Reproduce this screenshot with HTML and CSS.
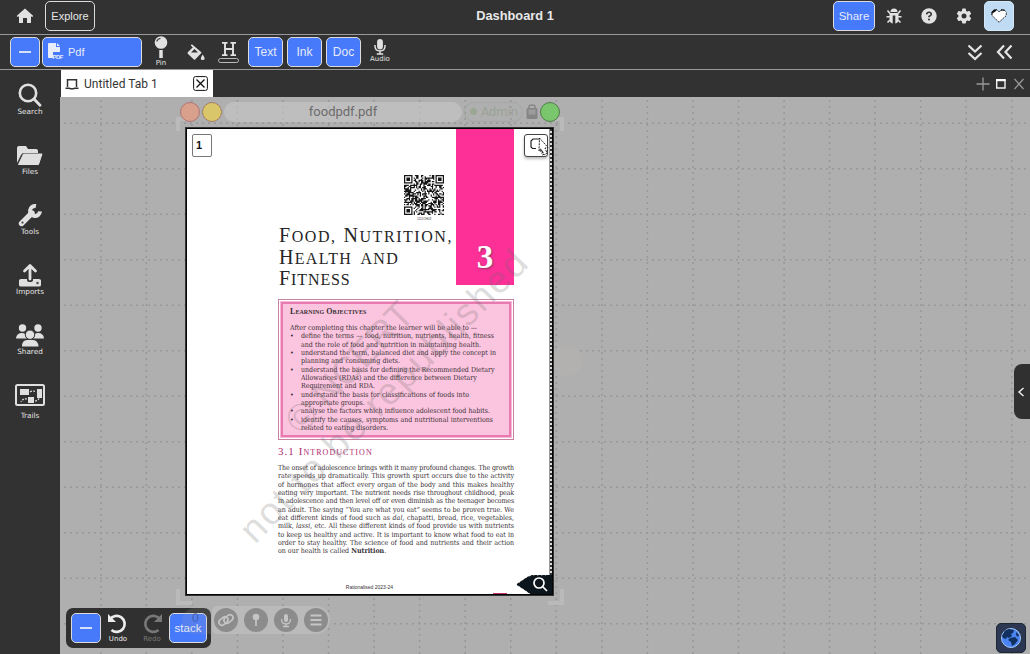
FILE: index.html
```html
<!DOCTYPE html>
<html lang="en">
<head>
<meta charset="utf-8">
<title>Dashboard 1</title>
<link rel="stylesheet" href="styles.css">
</head>
<body>
<div class="app">
  <header class="topbar">
    <div class="top-left">
      <svg class="home" width="18" height="16" viewBox="0 0 18 16"><path d="M9 0.500 17.300 8 16.200 9 15 8.200V15H11V10H7V15H3V8.200L1.800 9 .7 8 5 4z" fill="#e2e2e2"/></svg>
      <button class="btn outline">Explore</button>
    </div>
    <div class="title">Dashboard 1</div>
    <div class="top-right">
      <button class="btn blue share">Share</button>
      <svg class="ticon" viewBox="0 0 16 16"><g fill="none" stroke="#e2e2e2" stroke-width="1.600"><path d="M1.500 2.500 4 5.500M14.500 2.500 12 5.500M.5 8.700H4M15.500 8.700H12M1.500 14.500 4 12M14.500 14.500 12 12"/></g><path d="M4.500 4a3.500 3.500 0 0 1 7 0zM3.500 5h9v6q0 4-3.200 4.500V7.500H6.700V15.500Q3.500 15 3.500 11z" fill="#e2e2e2"/></svg>
      <svg class="ticon" viewBox="0 0 16 16"><circle cx="8" cy="8" r="7.700" fill="#e2e2e2"/><path d="M5.700 6.300Q5.900 4.300 8 4.300T10.300 6.200Q10.300 7.300 8 8.500V9.300" fill="none" stroke="#323232" stroke-width="1.600"/><circle cx="8" cy="11.500" r="1" fill="#323232"/></svg>
      <svg class="ticon" viewBox="0 0 16 16"><g fill="#e2e2e2"><circle cx="8" cy="8" r="5.600"/><rect x="6" y=".6" width="4" height="14.800" rx="1"/><rect x="6" y=".6" width="4" height="14.800" rx="1" transform="rotate(60 8 8)"/><rect x="6" y=".6" width="4" height="14.800" rx="1" transform="rotate(120 8 8)"/></g><circle cx="8" cy="8" r="2.500" fill="#323232"/></svg>
      <button class="btn avatar"><svg width="16" height="14" viewBox="0 0 16 14"><path d="M8 13.300 1 6.500V3L3.500.8H6L8 3 10 .8h3L15.300 3v3.500z" fill="#fff" stroke="#111" stroke-dasharray="1.500 1"/><path d="M.5 6V3L3 .5H6L4.500 2.500 2 4zM9 2.500 10.500.5H13L14 2 11 1.500z" fill="#111"/></svg></button>
    </div>
  </header>

  <div class="toolbar">
    <button class="btn blue minus"><i></i></button>
    <button class="btn blue pdf"><svg width="16" height="17" viewBox="0 0 16 17"><path d="M1 0H8V4H12V9H5V15H1Q0 15 0 14V1Q0 0 1 0ZM9 0 12 3H9Z" fill="#e8ecf8"/><text x="4.500" y="15.800" class="pdf-mark" textLength="11">PDF</text></svg><span>Pdf</span></button>
    <div class="tool pin"><svg width="14" height="23" viewBox="0 0 14 23"><circle cx="7" cy="6.500" r="6.300" fill="#e2e2e2"/><path d="M2.700 5.500Q3.500 2.700 6.500 2.300" stroke="#444" fill="none" stroke-width="1.200"/><path d="M7 14v8" stroke="#e2e2e2" stroke-width="3.500"/></svg><span>Pin</span></div>
    <svg class="bucket" width="18" height="17" viewBox="0 0 18 17"><path d="M4.300.9 13.500 8.700 7.500 14.800 1.400 9 6.500 4" fill="#e2e2e2" stroke="#e2e2e2" stroke-width="1.800" stroke-linejoin="round"/><path d="M4 8.500 7.500 5 11 8.500z" fill="#323232"/><path d="M15.700 10.500Q19.500 16 15.700 16T15.700 10.500" fill="#e2e2e2"/></svg>
    <div class="highlight"><svg width="16" height="14" viewBox="0 0 16 14"><path d="M1 .9H6.500M9.500 .9h5.500M1 13.100H6.500M9.500 13.100h5.500M4 1V13M12 1V13M4 7h8" stroke="#e2e2e2" stroke-width="1.900"/></svg><i></i></div>
    <button class="btn blue small">Text</button>
    <button class="btn blue small">Ink</button>
    <button class="btn blue small">Doc</button>
    <div class="tool audio"><svg width="12" height="16" viewBox="0 0 12 16"><rect x="3.100" width="5.800" height="10.500" rx="2.900" fill="#e2e2e2"/><path d="M1 6v1.500Q1.500 12 6 12T11 7.500V6M6 12v3M2.800 15h6.400" fill="none" stroke="#e2e2e2" stroke-width="1.500"/></svg><span>Audio</span></div>
    <div class="chevrons">
      <svg width="16" height="17" viewBox="0 0 16 17"><path d="M1.500 1.500 8 7.500 14.500 1.500M1.500 9 8 15 14.500 9"/></svg>
      <svg width="17" height="16" viewBox="0 0 17 16"><path d="M8 1.500 2 8 8 14.500M15.500 1.500 9.500 8 15.500 14.500"/></svg>
    </div>
  </div>

  <div class="body">
    <nav class="sidebar">
      <div class="side"><svg viewBox="0 0 30 24"><circle cx="13" cy="10" r="8.200" fill="none" stroke="#e0e0e0" stroke-width="2.600"/><path d="m19 16 6 6.300" stroke="#e0e0e0" stroke-width="2.800" stroke-linecap="round"/></svg><span>Search</span></div>
      <div class="side"><svg viewBox="0 0 30 24"><path d="M2 20V5Q2 3 4 3h7l2 3h8q2 0 2 2v2H9q-2 0-3 2z" fill="#e0e0e0"/><path d="M8.500 11H27L23.500 21.500H3.500z" fill="#e0e0e0" stroke="#e0e0e0" stroke-linejoin="round"/></svg><span>Files</span></div>
      <div class="side"><svg viewBox="0 0 30 24"><path d="M6.500 20.500 17 10" stroke="#e0e0e0" stroke-width="5.400" stroke-linecap="round"/><path d="M20.500 3A5 5 0 1 0 25 8" transform="rotate(5 20 8)" fill="none" stroke="#e0e0e0" stroke-width="4"/><circle cx="7.500" cy="19.500" r="1.500" fill="#555" stroke="#fff" stroke-width=".6"/></svg><span>Tools</span></div>
      <div class="side"><svg viewBox="0 0 30 24"><path d="M4 17.500q0-1.500 2-1.500h6v1q0 2 3 2t3-2v-1h6q2 0 2 1.500V22q0 1.500-2 1.500H6Q4 23.500 4 22z" fill="#e0e0e0"/><path d="M15 16V3M9.500 8 15 2.500 20.500 8" fill="none" stroke="#e0e0e0" stroke-width="2.800" stroke-linecap="round" stroke-linejoin="round"/><circle cx="22.500" cy="20" r="1.300" fill="#555"/></svg><span>Imports</span></div>
      <div class="side"><svg viewBox="0 0 30 24"><g fill="#e0e0e0"><circle cx="7.500" cy="5" r="3.700"/><circle cx="23" cy="5" r="3.700"/><path d="M1 15.500Q1.500 10 7 10q2 0 3 1 0 3 2 4.500zM29 15.500Q28.500 10 23 10q-2 0-3 1 0 3-2 4.500zM7 23.500Q7 17 12 17h6q5 0 5.500 6.500z"/></g><circle cx="15" cy="11.700" r="4.700" fill="#e0e0e0" stroke="#323232" stroke-width="1"/></svg><span>Shared</span></div>
      <div class="side trails"><svg viewBox="0 0 30 24"><rect x="1" y="2" width="28" height="20" rx="1.500" fill="none" stroke="#e0e0e0" stroke-width="2"/><path d="M5 6h9v6H5zM22 6h5v9h-5zM13 14h6v6h-6z" fill="#e0e0e0"/><path d="M15 9q3-2 6 0M12 16q-4-1-6 3M20 18q3 0 5-4" fill="none" stroke="#e0e0e0" stroke-dasharray="2 1.200" stroke-width="1.200"/></svg><span>Trails</span></div>
    </nav>

    <main class="main">
      <div class="tabs">
        <div class="tab"><svg width="14" height="12" viewBox="0 0 14 12"><path d="M2.500 9V1.800h9V9M.5 10.300h4l1 .4h3l1-.4h4" fill="none" stroke="#333" stroke-width="1.500"/></svg><span>Untitled Tab 1</span>
          <svg class="close" width="15" height="15" viewBox="0 0 15 15"><rect x=".6" y=".6" width="13.800" height="13.800" rx="2" fill="#fff" stroke="#111"/><path d="m3.500 3.500 8 8M11.500 3.500l-8 8" stroke="#111" stroke-width="1.300"/></svg></div>
        <svg class="winctl" width="48" height="14" viewBox="0 0 48 14"><g fill="none" stroke="#999"><path d="M7 .5v13M.5 7h13M38.500 2l9 10M47.500 2l-9 10" stroke-width="1.300"/><path d="M20.700 3.500h8.300v7.500h-8.300z" stroke="#f2f2f2" stroke-width="1.400"/><path d="M20 3h9.700" stroke="#fff" stroke-width="2"/></g></svg>
      </div>

      <div class="canvas">
        <svg class="grid" width="970" height="557"><g id="grid-lines" stroke="#989898" stroke-width="1.500" stroke-dasharray="2 4"></g></svg>
        <div class="faint-dot"></div>
        <svg class="corners" width="388" height="488" viewBox="0 0 388 488" fill="none" stroke="#bababa" stroke-width="4"><path d="M2 14V2H14M374 2h12v12M2 472v14h14M372 486h14V472"/></svg>
        <div class="docbar">
          <i class="dot red"></i><i class="dot yellow"></i><div class="doc-title">foodpdf.pdf</div>
          <div class="admin"><i></i>Admin</div>
          <svg width="12" height="16" viewBox="0 0 12 16"><path d="M3 5V2.500Q3 1 6 1t3 1.500V5" fill="none" stroke="#858585" stroke-width="1.400"/><rect x=".5" y="4" width="11" height="11" rx="1.500" fill="#858585"/><path d="M2.500 5.500h7v5h-7z" fill="#9c9c9c"/></svg><i class="dot green"></i>
        </div>

        <section class="doc">
          <div class="chapter">
            <div class="chapter-left">
              <svg class="qr" id="qr" width="40" height="40" viewBox="0 0 33 33"></svg>
              <div class="qr-label">1151CH03</div>
              <h1><span class="l1"><b>F</b>ood, <b>N</b>utrition,</span><span class="l2"><b>H</b>ealth and</span><span class="l3"><b>F</b>itness</span></h1>
            </div>
            <div class="chapter-no">3</div>
          </div>
          <div class="objectives"><div class="obj-inner">
            <h2>Learning Objectives</h2>
            <p style="width:185px">After completing this chapter the learner will be able to —</p>
            <ul>
              <li><p style="width:193px">define the terms — food, nutrition, nutrients, health, fitness</p><p style="width:180px">and the role of food and nutrition in maintaining health.</p></li>
              <li><p style="width:195px">understand the term, balanced diet and apply the concept in</p><p style="width:99px">planning and consuming diets.</p></li>
              <li><p style="width:193px">understand the basis for defining the Recommended Dietary</p><p style="width:173px">Allowances (RDAs) and the difference between Dietary</p><p style="width:74px">Requirement and RDA.</p></li>
              <li><p style="width:168px">understand the basis for classifications of foods into</p><p style="width:63px">appropriate groups.</p></li>
              <li><p style="width:189px">analyse the factors which influence adolescent food habits.</p></li>
              <li><p style="width:192px">identify the causes, symptoms and nutritional interventions</p><p style="width:86px">related to eating disorders.</p></li>
            </ul>
          </div></div>
          <h3>3.1 Introduction</h3>
          <div class="prose">
            <p class="tight">The onset of adolescence brings with it many profound changes. The growth</p>
            <p>rate speeds up dramatically. This growth spurt occurs due to the activity</p>
            <p>of hormones that affect every organ of the body and this makes healthy</p>
            <p class="tight">eating very important. The nutrient needs rise throughout childhood, peak</p>
            <p class="tight">in adolescence and then level off or even diminish as the teenager becomes</p>
            <p>an adult. The saying “You are what you eat” seems to be proven true. We</p>
            <p>eat different kinds of food such as <em>dal</em>, chapatti, bread, rice, vegetables,</p>
            <p>milk, <em>lassi</em>, etc. All these different kinds of food provide us with nutrients</p>
            <p>to keep us healthy and active. It is important to know what food to eat in</p>
            <p>order to stay healthy. The science of food and nutrients and their action</p>
            <p style="width:107px">on our health is called <b>Nutrition</b>.</p>
          </div>
          <div class="foot">Rationalised 2023-24</div>
          <svg class="watermark" width="365" height="465" viewBox="187 129 365 465"><text transform="translate(255 545) rotate(-45.500)" textLength="392">not to be republished</text><text transform="translate(301 436) rotate(-46)" textLength="166">© NCERT</text></svg>
          <div class="page-no">1</div>
          <div class="annot"></div>
          <svg class="cursor" width="22" height="22" viewBox="0 0 22 22"><path d="M8 11.500H4.500L3 10V4l2-2h7" fill="none" stroke="#222" stroke-width="1.200"/><path d="M11.500 1 20 10.500l-3 .5 2 5-3 2-2-5-3 1z" fill="#fff" stroke="#222" stroke-dasharray="2 1"/><path d="m12 12 4 7" stroke="#222" stroke-width="2" stroke-dasharray="1 1"/></svg>
          <div class="scroll"></div>
          <i class="pink-mark"></i>
          <svg class="find" width="37" height="19" viewBox="0 0 37 19"><path d="M0 9.500 11 2 16 0H37V19H14L10 16z" fill="#0c151b"/><path d="M0 9.500 11 2 16 0H30M0 9.500 10 16l4 3" fill="none" stroke="#fff" stroke-dasharray="1 3"/><circle cx="23" cy="8" r="5" fill="none" stroke="#fff" stroke-width="1.700"/><path d="m26.500 11.500 4.500 4.500" stroke="#fff" stroke-width="1.700"/></svg>
        </section>

        <div class="linkbar">
          <i><svg viewBox="0 0 24 24"><g fill="none" stroke="#c5c5c5" stroke-width="1.600"><rect x="4.500" y="10" width="10" height="6" rx="3" transform="rotate(-40 9.500 13)"/><rect x="9.500" y="8" width="10" height="6" rx="3" transform="rotate(-40 14.500 11)"/></g></svg></i>
          <i><svg viewBox="0 0 24 24"><circle cx="12" cy="9" r="3.300" fill="#c5c5c5"/><path d="M12 10v8" stroke="#c5c5c5" stroke-width="1.700"/></svg></i>
          <i><svg viewBox="0 0 24 24"><rect x="10" y="6" width="4" height="8" rx="2" fill="#c5c5c5"/><path d="M7.500 11q0 5 4.500 5t4.500-5M12 16v2M9 18.500h6" fill="none" stroke="#c5c5c5" stroke-width="1.300"/></svg></i>
          <i><svg viewBox="0 0 24 24"><path d="M6.500 7.500h11M6.500 12h11M6.500 16.500h11" stroke="#c5c5c5" stroke-width="1.800"/></svg></i>
        </div>
        <div class="undobar">
          <button class="btn blue minus"><i></i></button>
          <div class="undo"><svg width="22" height="21" viewBox="0 0 22 21"><path d="M3 6.500A8 8 0 1 1 4.500 17" fill="none" stroke="currentColor" stroke-width="2.700"/><path d="M1 1v8h8z" fill="currentColor"/></svg><span>Undo</span></div>
          <div class="undo dim"><svg width="22" height="21" viewBox="0 0 22 21"><path d="M19 6.500A8 8 0 1 0 17.500 17" fill="none" stroke="currentColor" stroke-width="2.700"/><path d="M21 1v8h-8z" fill="currentColor"/></svg><span>Redo</span></div>
          <button class="btn blue stack">stack</button>
          <div class="ghost">0</div>
        </div>
        <div class="drawer"><svg width="8" height="10" viewBox="0 0 8 10"><path d="M6.500 1 2 5l4.500 4" fill="none" stroke="#f2f2f2" stroke-width="1.400"/></svg></div>
        <div class="globe"><svg width="22" height="22" viewBox="0 0 22 22"><circle cx="11" cy="11" r="9.500" fill="#4a84f2" stroke="#a8c8f5"/><path d="M5 3.500 9 2l5 1-1 3-2 1 1 2-3 2-2-1-1 2-3-1-1-2zM10 11l5-1 3 3-3 4-3 2-1-4-3-2zM16 5l3 3-1 2-2-2z" fill="#11305f"/></svg></div>
      </div>
    </main>
  </div>
</div>
<script src="draw.js"></script>
</body>
</html>
```
FILE: styles.css
```css
* { box-sizing: border-box; }
body { margin: 0; font-family: "Liberation Sans", Arial, sans-serif; overflow: hidden; background: #323232; }
p, h1, h2, h3, ul { margin: 0; padding: 0; font-weight: normal; }
svg { display: block; flex: none; }
.app { width: 1030px; height: 654px; display: flex; flex-direction: column; }
.topbar { height: 35px; flex: none; border-bottom: 1px solid #999; display: grid; grid-template-columns: 1fr auto 1fr; align-items: start; }
.btn { font: 12px "Liberation Sans", Arial, sans-serif; height: 30px; padding: 0 0 1px; border: 1px solid #dcdcdc; border-radius: 5px; color: #e8e8e8; background: transparent; display: flex; align-items: center; justify-content: center; flex: none; }
.blue { background: #4779fb; color: #e6ebfa; }
.top-left { display: flex; gap: 11px; padding: 1px 0 0 16px; align-items: center; height: 31px; }
.outline { width: 50px; font-size: 11px; }
.title { font-weight: bold; font-size: 12.8px; color: #e8e8e8; line-height: 32px; }
.top-right { display: flex; justify-content: flex-end; align-items: center; padding: 1px 16px 0 0; }
.share { width: 42px; font-size: 11.5px; }
.ticon { width: 16px; height: 16px; margin-left: 19px; }
.share + .ticon { margin-left: 11px; }
.avatar { width: 30px; margin-left: 12px; background: #c0dcf5; border-color: #d2e7fa; }
.toolbar { height: 35px; flex: none; border-bottom: 1px solid #999; display: flex; align-items: center; padding-left: 10px; }
.minus { width: 30px; }
.minus i { width: 12px; height: 2px; background: #d5e0fb; }
.pdf { width: 100px; margin-left: 2px; justify-content: flex-start; padding-left: 5px; gap: 4px; font-size: 11px; }
.pdf-mark { font: bold 6px "Liberation Sans", sans-serif; fill: #e8ecf8; }
.tool { display: flex; flex-direction: column; align-items: center; color: #e2e2e2; font: 7px/7px "DejaVu Sans", sans-serif; }
.pin { margin: -2px 0 0 12px; gap: 1px; }
.bucket { margin-left: 19px; }
.highlight { margin: 0 9px 0 13px; display: flex; flex-direction: column; align-items: center; gap: 2px; }
.highlight i { width: 21px; height: 5px; border: 1px solid #bbb; border-radius: 3px; }
.small { width: 35px; margin-right: 4px; font-size: 12px; }
.audio { margin: -2px 0 0 5px; gap: 1px; }
.chevrons { margin-left: auto; display: flex; align-items: center; gap: 13px; padding-right: 17px; }
.chevrons path { fill: none; stroke: #e5e5e5; stroke-width: 2.2; }
.body { flex: 1; display: flex; min-height: 0; }
.sidebar { width: 60px; flex: none; padding-top: 12px; }
.side { height: 60px; display: flex; flex-direction: column; align-items: center; color: #e2e2e2; font: 7.3px/9px "DejaVu Sans", sans-serif; }
.side svg { width: 30px; height: 24px; margin-top: 1px; }
.trails svg { margin-bottom: 4px; }
.main { width: 970px; display: flex; flex-direction: column; }
.tabs { height: 27px; display: flex; justify-content: space-between; align-items: center; padding-right: 6px; padding-left: 1px; }
.tab { width: 152px; height: 27px; background: #fff; color: #333; display: flex; align-items: center; padding: 0 5px 0 4px; font: 12px Roboto, sans-serif; }
.tab span { margin-left: 5px; letter-spacing: .03px; }
.close { margin-left: auto; }
.canvas { position: relative; height: 557px; background: #afafaf; overflow: hidden; }
.grid { position: absolute; left: 0; top: 0; }
.faint-dot { position: absolute; left: 492px; top: 249px; width: 30px; height: 30px; border-radius: 50%; background: #b2b1af; }
.corners { position: absolute; left: 116px; top: 20px; }
.docbar { position: absolute; left: 120px; top: 4px; width: 380px; height: 21px; display: flex; align-items: center; gap: 2px; }
.dot { width: 20px; height: 20px; border-radius: 50%; flex: none; }
.red { background: #d9a08c; border: 1px solid #ae7579; }
.yellow { background: #d9c66b; border: 1px solid #a47d64; }
.green { background: #79c66c; border: 1px solid #507b4c; }
.doc-title { flex: 1; height: 20px; border-radius: 10px; background: rgba(200,200,200,.6); color: #6b6b6b; font: 13px/19px Roboto, sans-serif; text-align: center; }
.admin { width: 59px; height: 20px; border: 1px solid #a3a8a0; border-radius: 10px; color: #9ba297; font: 12px "DejaVu Sans", sans-serif; display: flex; align-items: center; gap: 4px; padding-left: 5px; margin-right: 1px; letter-spacing: -.3px; }
.admin i { width: 7px; height: 7px; border-radius: 50%; background: #9aa793; flex: none; }
.doc { position: absolute; left: 126px; top: 31px; width: 367px; height: 467px; border: 1px solid #050505; outline: .5px solid #333; background: #fff; overflow: hidden; color: #383035; font-family: "DejaVu Serif Condensed", "DejaVu Serif", serif; font-stretch: condensed; }
.chapter { width: 236px; height: 170px; margin-left: 91px; display: flex; align-items: flex-start; }
.chapter-left { width: 178px; padding-top: 46px; }
.qr { margin-left: 126px; }
.qr-label { font: 3px/4px "Liberation Sans", sans-serif; margin: 2px 0 5px 126px; width: 40px; text-align: center; }
h1 { font: 16px/21.5px "Liberation Serif", serif; text-transform: uppercase; color: #252525; white-space: nowrap; padding-left: 1px; }
h1 span { display: block; height: 21.5px; text-align-last: justify; }
h1 b { font-weight: normal; font-size: 20px; line-height: 1px; }
.l1 { width: 174px; letter-spacing: 1.55px; }
.l2 { width: 120px; letter-spacing: 1.3px; }
.l3 { width: 72px; letter-spacing: .9px; }
.chapter-no { width: 58px; height: 156px; background: #fd3098; color: #fff; font: bold 33px/38px "Liberation Serif", serif; text-align: center; padding-top: 109px; text-shadow: 1px 1px 2px #8c3561; }
.objectives { width: 236px; height: 141px; margin-left: 91px; border: 1px solid #c783a6; padding: 2px 2px; background: #fff; }
.obj-inner { height: 135px; border: 2px solid #e879b1; outline: 1px solid #f7b8d6; background: #fcc5df; padding: 3px 0 0 7px; font-size: 7px; line-height: 8.33px; }
.obj-inner p, .prose p { white-space: nowrap; text-align-last: justify; }
h2 { font: bold 8px/10px "Liberation Serif", serif; font-variant: small-caps; margin-bottom: 7px; letter-spacing: .06px; }
ul { list-style: none; }
li { padding-left: 11px; position: relative; }
li::before { content: "•"; position: absolute; left: 0; top: 0; }
h3 { font: 11px/13px "Liberation Serif", serif; font-variant: small-caps; color: #b12c72; margin: 5px 0 0 91px; letter-spacing: 1.05px; white-space: nowrap; }
.prose { margin: 6px 0 0 91px; width: 236px; font-size: 7px; line-height: 8.35px; }
.prose .tight { letter-spacing: -.13px; }
.foot { font: 5px/6px "Liberation Sans", sans-serif; width: 365px; text-align: center; margin-top: 28px; }
.watermark { position: absolute; left: 0; top: 0; font: 38px "Liberation Sans", sans-serif; fill: rgba(105,105,105,.23); pointer-events: none; }
.page-no { position: absolute; left: 5px; top: 5px; width: 20px; height: 23px; border: 1px solid #777; border-radius: 2px; background: #fff; color: #111; font: bold 11px/20px "Liberation Sans", sans-serif; padding-left: 3px; }
.annot { position: absolute; left: 337px; top: 5px; width: 24px; height: 23px; border: 1px solid #444; border-radius: 3px; background: #fff; box-shadow: 0 2px 3px #bbb; }
.cursor { position: absolute; left: 341px; top: 8px; }
.scroll { position: absolute; right: 0; top: 0; width: 3px; height: 465px; background: repeating-linear-gradient(#333 0 2px, #ddd 2px 4px); border-left: 1px solid #999; }
.pink-mark { position: absolute; left: 306px; bottom: 0; width: 14px; height: 1px; background: #c42e6c; }
.find { position: absolute; left: 329px; top: 446px; }
.linkbar { position: absolute; left: 152px; top: 509px; width: 118px; height: 28px; border-radius: 5px 14px 14px 5px; background: #bababa; display: flex; align-items: center; gap: 6px; padding-left: 2px; }
.linkbar i { width: 24px; height: 24px; border-radius: 50%; background: #8c8c8c; flex: none; }
.undobar { position: absolute; left: 6px; top: 511px; width: 145px; height: 40px; border-radius: 7px; background: #303030; display: flex; align-items: center; padding-left: 5px; }
.undo { width: 34px; display: flex; flex-direction: column; align-items: center; color: #ececec; font: 7px/8px "DejaVu Sans", sans-serif; gap: 1px; }
.dim { color: #777; }
.stack { width: 38px; font-size: 11.5px; }
.ghost { position: absolute; left: 116px; top: 0; width: 29px; height: 26px; border-radius: 14px 0 0 14px; background: rgba(180,180,180,.14); color: rgba(40,60,110,.5); font: 12px/20px "Liberation Sans", sans-serif; padding-left: 10px; }
.drawer { position: absolute; right: 0; top: 267px; width: 16px; height: 55px; background: #303030; border-radius: 8px 0 0 8px; display: flex; align-items: center; padding-left: 3px; }
.globe { position: absolute; left: 936px; top: 526px; width: 30px; height: 30px; border-radius: 5px; background: #2c3852; border: 1px solid #1f2634; display: flex; align-items: center; justify-content: center; }
```
FILE: draw.js
```js
const NS = "http://www.w3.org/2000/svg";

// dotted canvas grid
const grid = document.getElementById("grid-lines");
const line = (x1, y1, x2, y2) => {
  const l = document.createElementNS(NS, "line");
  Object.entries({ x1, y1, x2, y2 }).forEach(([k, v]) => l.setAttribute(k, v));
  grid.appendChild(l);
};
for (let i = 0; i < 21; i++) line(40.8 + i * 45.55, 3, 40.8 + i * 45.55, 557);
for (let i = 0; i < 12; i++) line(4, 26.3 + i * 45.5, 970, 26.3 + i * 45.5);

// code modules with three finder squares
let seed = 41, d = "";
const n = 33;
const finder = (x, y) => {
  const r = Math.max(Math.abs(x - 3), Math.abs(y - 3));
  return r === 3 || r <= 1;
};
for (let y = 0; y < n; y++) {
  for (let x = 0; x < n; x++) {
    seed = (seed * 1103515245 + 12345) % 2147483648;
    let on = seed / 2147483648 > 0.47;
    const fx = x > 24 ? 32 - x : x, fy = y > 24 ? 32 - y : y;
    if (fx < 8 && fy < 8 && !(x > 24 && y > 24)) on = finder(fx, fy);
    if (on) d += `M${x} ${y}h1v1h-1z`;
  }
}
const path = document.createElementNS(NS, "path");
path.setAttribute("d", d);
path.setAttribute("fill", "#151515");
document.getElementById("qr").appendChild(path);
```
